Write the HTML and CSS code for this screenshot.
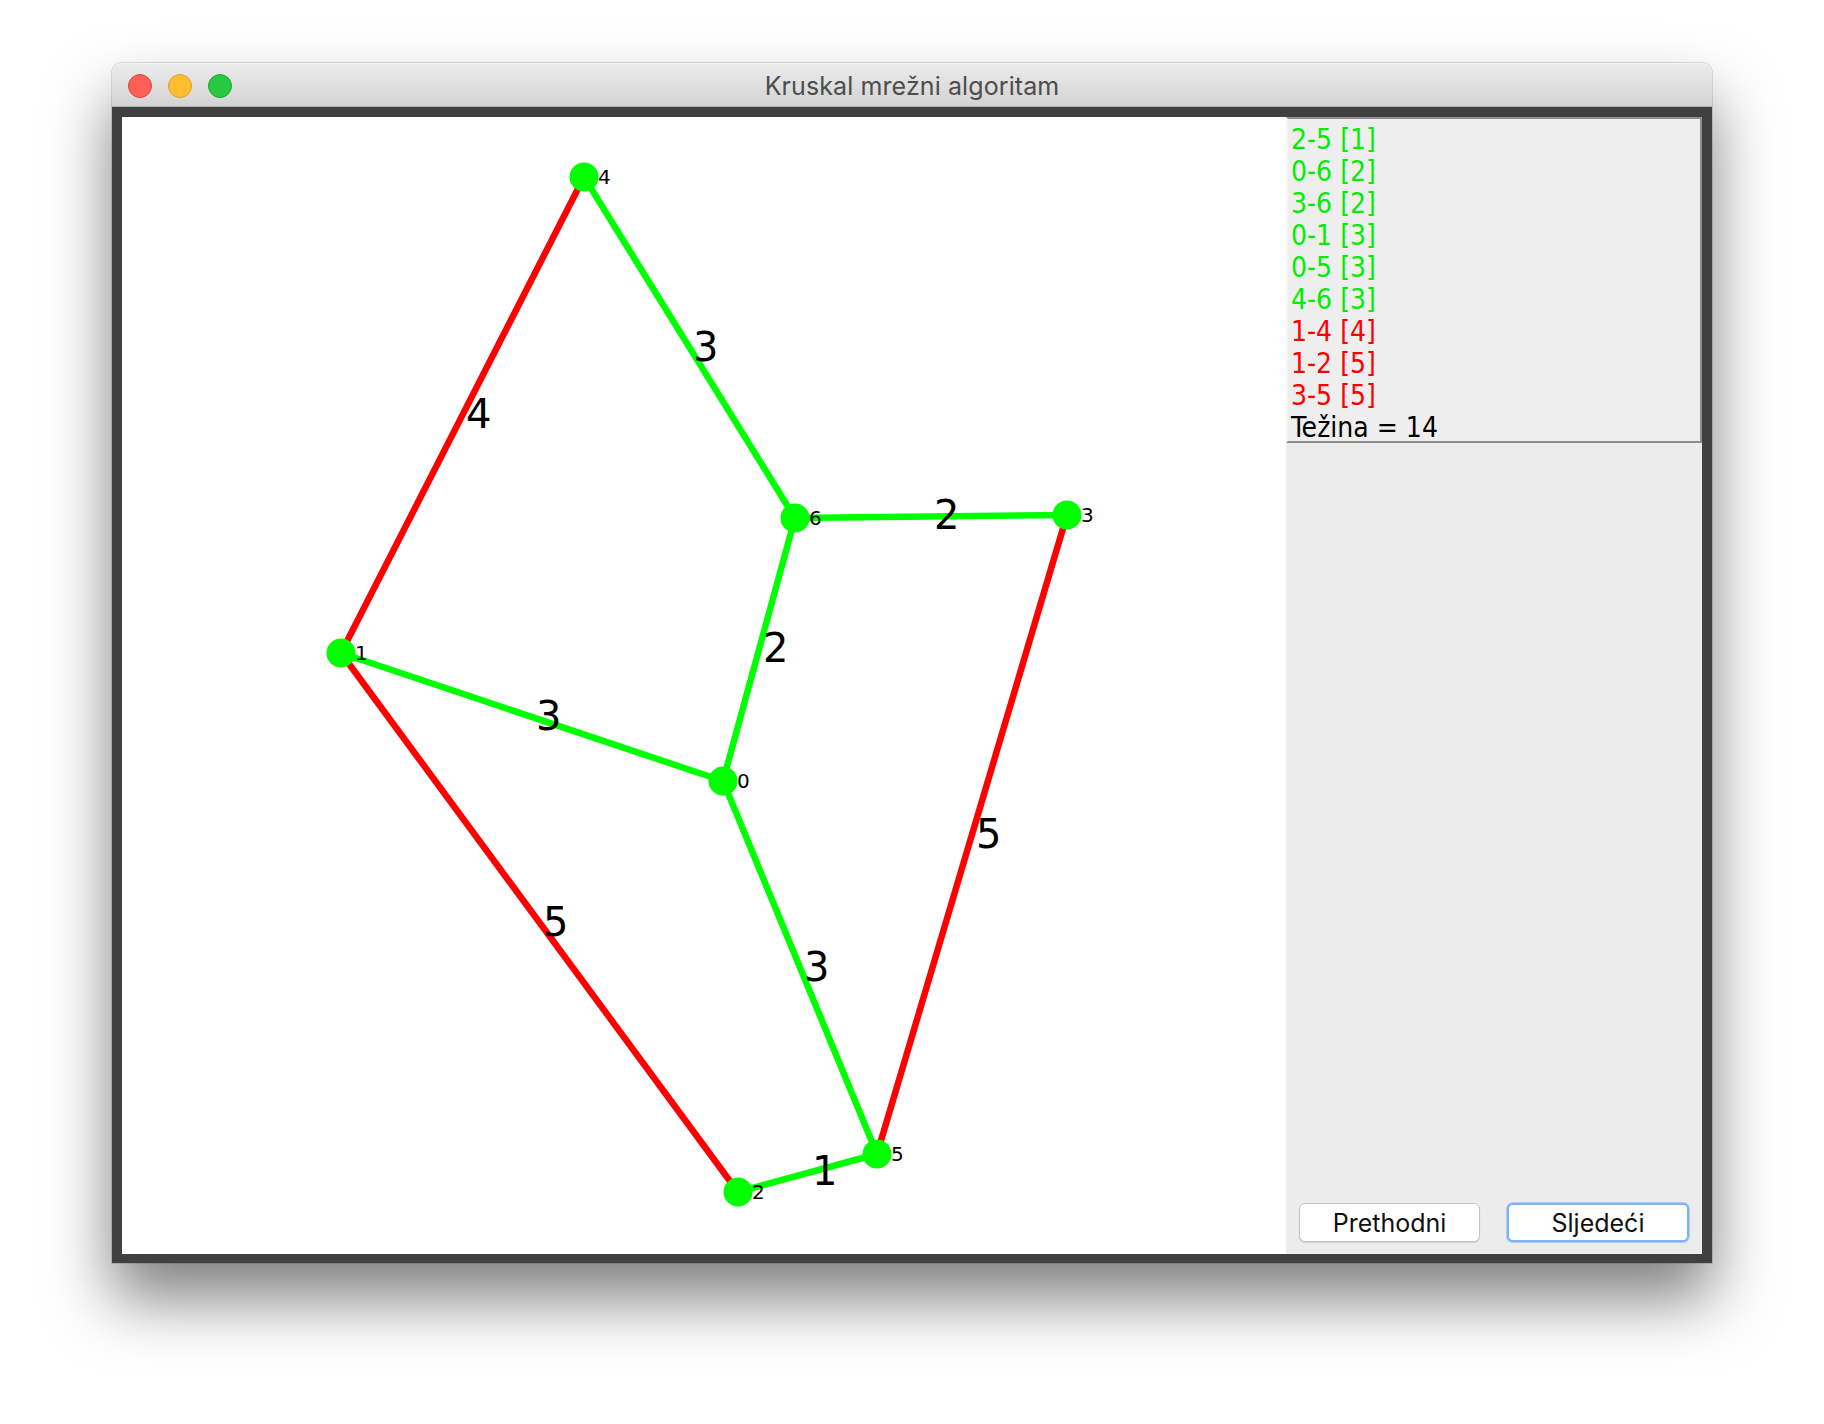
FILE: index.html
```html
<!DOCTYPE html>
<html>
<head>
<meta charset="utf-8">
<title>Kruskal mrežni algoritam</title>
<link rel="stylesheet" href="styles.css">
</head>
<body>
<div class="window">
  <div class="titlebar">
    <div class="lights">
      <span class="light red"></span>
      <span class="light yellow"></span>
      <span class="light green"></span>
    </div>
    <div class="title">Kruskal mrežni algoritam</div>
  </div>
  <div class="frame">
    <div class="canvas">
      <svg class="graph" width="1164" height="1136" viewBox="0 0 1164 1136">
        <g class="edges">
          <line class="e-red" x1="219" y1="536" x2="462" y2="60"/>
          <line class="e-red" x1="219" y1="536" x2="616" y2="1075"/>
          <line class="e-red" x1="945" y1="398" x2="755" y2="1037"/>
          <line class="e-green" x1="616" y1="1075" x2="755" y2="1037"/>
          <line class="e-green" x1="601" y1="664" x2="673" y2="401"/>
          <line class="e-green" x1="945" y1="398" x2="673" y2="401"/>
          <line class="e-green" x1="601" y1="664" x2="219" y2="536"/>
          <line class="e-green" x1="601" y1="664" x2="755" y2="1037"/>
          <line class="e-green" x1="462" y1="60" x2="673" y2="401"/>
        </g>
        <g class="nodes">
          <circle cx="601" cy="664" r="14.5"/>
          <circle cx="219" cy="536" r="14.5"/>
          <circle cx="616" cy="1075" r="14.5"/>
          <circle cx="945" cy="398" r="14.5"/>
          <circle cx="462" cy="60" r="14.5"/>
          <circle cx="755" cy="1037" r="14.5"/>
          <circle cx="673" cy="401" r="14.5"/>
        </g>
        <g class="node-labels">
          <text x="615" y="671">0</text>
          <text x="233" y="543">1</text>
          <text x="630" y="1082">2</text>
          <text x="959" y="405">3</text>
          <text x="476" y="67">4</text>
          <text x="769" y="1044">5</text>
          <text x="687" y="408">6</text>
        </g>
        <g class="weights">
          <text x="690" y="1068">1</text>
          <text x="641" y="545">2</text>
          <text x="812" y="412">2</text>
          <text x="414" y="613">3</text>
          <text x="682" y="864">3</text>
          <text x="571" y="244">3</text>
          <text x="344" y="311">4</text>
          <text x="421" y="819">5</text>
          <text x="854" y="731">5</text>
        </g>
      </svg>
    </div>
    <div class="side">
      <div class="log">
        <div class="row ok">2-5 [1]</div>
        <div class="row ok">0-6 [2]</div>
        <div class="row ok">3-6 [2]</div>
        <div class="row ok">0-1 [3]</div>
        <div class="row ok">0-5 [3]</div>
        <div class="row ok">4-6 [3]</div>
        <div class="row bad">1-4 [4]</div>
        <div class="row bad">1-2 [5]</div>
        <div class="row bad">3-5 [5]</div>
        <div class="row total">Težina = 14</div>
      </div>
      <div class="spacer"></div>
      <div class="buttons">
        <button class="btn">Prethodni</button>
        <button class="btn focused">Sljedeći</button>
      </div>
    </div>
  </div>
</div>
</body>
</html>
```
FILE: styles.css
```css
html, body {
  margin: 0;
  padding: 0;
  background: #ffffff;
}
body {
  width: 1824px;
  height: 1424px;
  overflow: hidden;
  padding-top: 63px;
  padding-left: 112px;
  box-sizing: border-box;
}
.window {
  width: 1600px;
  height: 1200px;
  border-radius: 10px 10px 0 0;
  box-shadow: 0 36px 64px rgba(0, 0, 0, 0.5), 0 0 0 1px rgba(0, 0, 0, 0.12);
  display: flex;
  flex-direction: column;
}
.titlebar {
  height: 44px;
  box-sizing: border-box;
  background: linear-gradient(#ebebeb, #d3d3d3);
  border-radius: 10px 10px 0 0;
  border-top: 1px solid #f4f4f4;
  border-bottom: 1px solid #b1b1b1;
  position: relative;
  display: flex;
  align-items: center;
  justify-content: center;
  padding-top: 2px;
}
.lights {
  position: absolute;
  left: 16px;
  top: 10px;
  display: flex;
  gap: 16px;
}
.light {
  width: 22px;
  height: 22px;
  border-radius: 50%;
  display: block;
}
.red { background: #fe5f57; border: 1px solid #e0443e; }
.yellow { background: #febc2e; border: 1px solid #dea123; }
.green { background: #28c840; border: 1px solid #1aab29; }
.title {
  font-family: Inter, "Noto Sans", sans-serif;
  font-size: 25px;
  color: #4d4d4d;
  letter-spacing: 0.1px;
}
.frame {
  flex: 1;
  background: #404040;
  padding: 10px 10px 9px 10px;
  display: flex;
}
.canvas {
  width: 1164px;
  height: 1137px;
  background: #ffffff;
}
.graph { display: block; }
.e-green { stroke: #00ff00; stroke-width: 6.5; }
.e-red { stroke: #ff0000; stroke-width: 6.5; }
.nodes circle { fill: #00ff00; }
.node-labels text {
  font-family: "DejaVu Sans", sans-serif;
  font-size: 20px;
  fill: #000;
}
.weights text {
  font-family: "DejaVu Sans", sans-serif;
  font-size: 40px;
  fill: #000;
}
.side {
  width: 416px;
  background: #ececec;
  display: flex;
  flex-direction: column;
}
.log {
  height: 326px;
  box-sizing: border-box;
  border: 2px solid #8e8e8e;
  border-left-color: #f6f6f6;
  background: #eeeeee;
  padding: 5px 0 0 3px;
  font-family: "DejaVu Sans Condensed", "DejaVu Sans", sans-serif;
  font-size: 28px;
  line-height: 32px;
}
.row { white-space: pre; }
.ok { color: #00ee00; }
.bad { color: #ff0000; }
.total { color: #000; }
.spacer { flex: 1; }
.buttons {
  display: flex;
  justify-content: space-between;
  padding: 0 13px 12px 13px;
}
.btn {
  width: 181px;
  height: 39px;
  box-sizing: border-box;
  background: #ffffff;
  border: 1px solid #c3c3c3;
  border-radius: 6px;
  box-shadow: 0 1px 1px rgba(0, 0, 0, 0.12);
  font-family: Inter, "Noto Sans", sans-serif;
  font-size: 25px;
  color: #111;
  padding: 0;
}
.btn.focused {
  width: 182px;
  border: 2px solid #7eb2f4;
  box-shadow: 0 0 0 1px #a9ccf7;
}
```
